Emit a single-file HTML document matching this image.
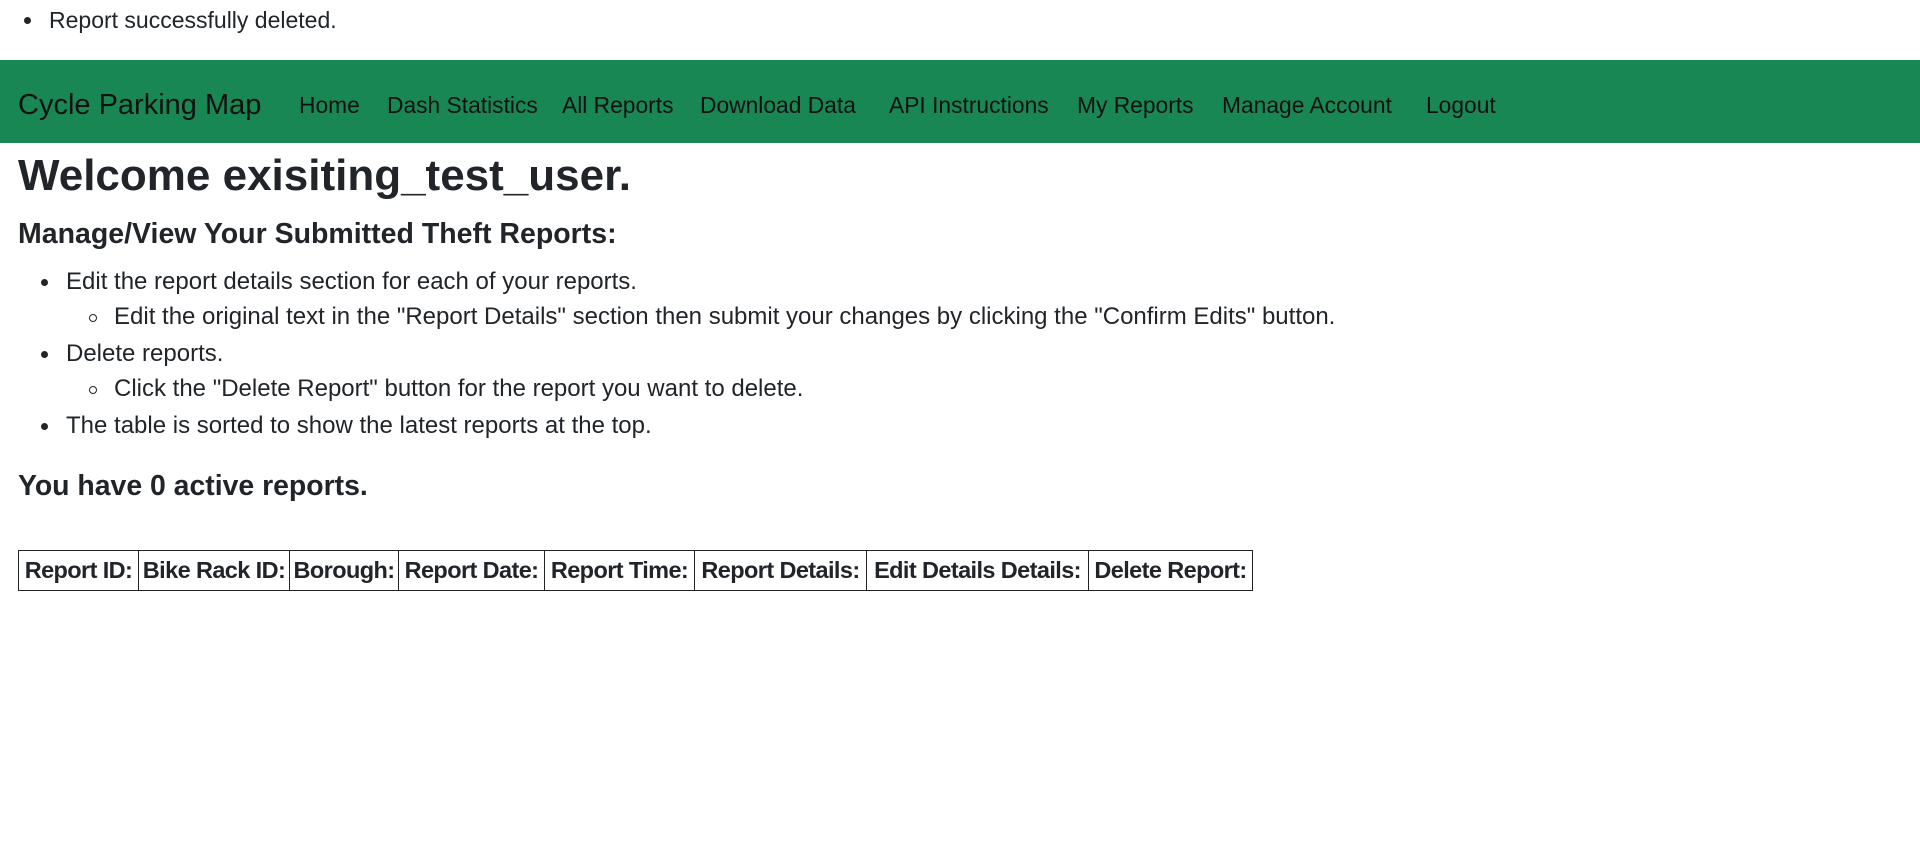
<!DOCTYPE html>
<html><head><meta charset="utf-8"><style>
body{margin:0;font-family:"Liberation Sans",sans-serif;color:#212529;background:#fff;}
.msg{position:absolute;left:49px;top:8px;font-size:23px;line-height:24px;}
.msg:before{content:"";position:absolute;left:-25px;top:9px;width:7px;height:7px;border-radius:50%;background:#212529;}
nav{position:absolute;left:0;top:60px;width:1920px;height:83px;background:#198754;}
nav span{position:absolute;top:4px;line-height:83px;font-size:22.8px;color:#111;white-space:nowrap;}
nav .brand{font-size:29px;left:18px;}
h1{position:absolute;left:18px;top:151px;margin:0;font-size:44px;line-height:50px;font-weight:bold;}
h3{position:absolute;left:18px;top:219px;margin:0;font-size:28.5px;line-height:30px;font-weight:bold;}
.li{position:absolute;font-size:24px;line-height:24px;white-space:nowrap;}
.li:before{content:"";position:absolute;left:-25px;top:9px;width:7px;height:7px;border-radius:50%;background:#212529;}
.li.s:before{background:none;border:1px solid #212529;width:6px;height:6px;}
.h4{position:absolute;left:18px;top:471px;font-size:28.4px;font-weight:bold;line-height:30px;}
table{position:absolute;left:18px;top:550px;border-collapse:collapse;height:41px;}
th{border:1px solid #222;padding:0;font-size:23.5px;white-space:nowrap;text-align:center;letter-spacing:-0.6px;}
</style></head><body>
<div class="msg">Report successfully deleted.</div>
<nav>
<span class="brand">Cycle Parking Map</span>
<span style="left:299px">Home</span>
<span style="left:387px">Dash Statistics</span>
<span style="left:562px">All Reports</span>
<span style="left:700px">Download Data</span>
<span style="left:889px">API Instructions</span>
<span style="left:1077px">My Reports</span>
<span style="left:1222px">Manage Account</span>
<span style="left:1426px">Logout</span>
</nav>
<h1>Welcome exisiting_test_user.</h1>
<h3>Manage/View Your Submitted Theft Reports:</h3>
<div class="li" style="left:66px;top:270px">Edit the report details section for each of your reports.</div>
<div class="li s" style="left:114px;top:305px">Edit the original text in the "Report Details" section then submit your changes by clicking the "Confirm Edits" button.</div>
<div class="li" style="left:66px;top:342px">Delete reports.</div>
<div class="li s" style="left:114px;top:377px">Click the "Delete Report" button for the report you want to delete.</div>
<div class="li" style="left:66px;top:414px">The table is sorted to show the latest reports at the top.</div>
<div class="h4">You have 0 active reports.</div>
<table><tr>
<th style="width:119px">Report ID:</th><th style="width:150px">Bike Rack ID:</th><th style="width:108px">Borough:</th><th style="width:145px">Report Date:</th><th style="width:149px">Report Time:</th><th style="width:171px">Report Details:</th><th style="width:221px">Edit Details Details:</th><th style="width:163px">Delete Report:</th>
</tr></table>
</body></html>
